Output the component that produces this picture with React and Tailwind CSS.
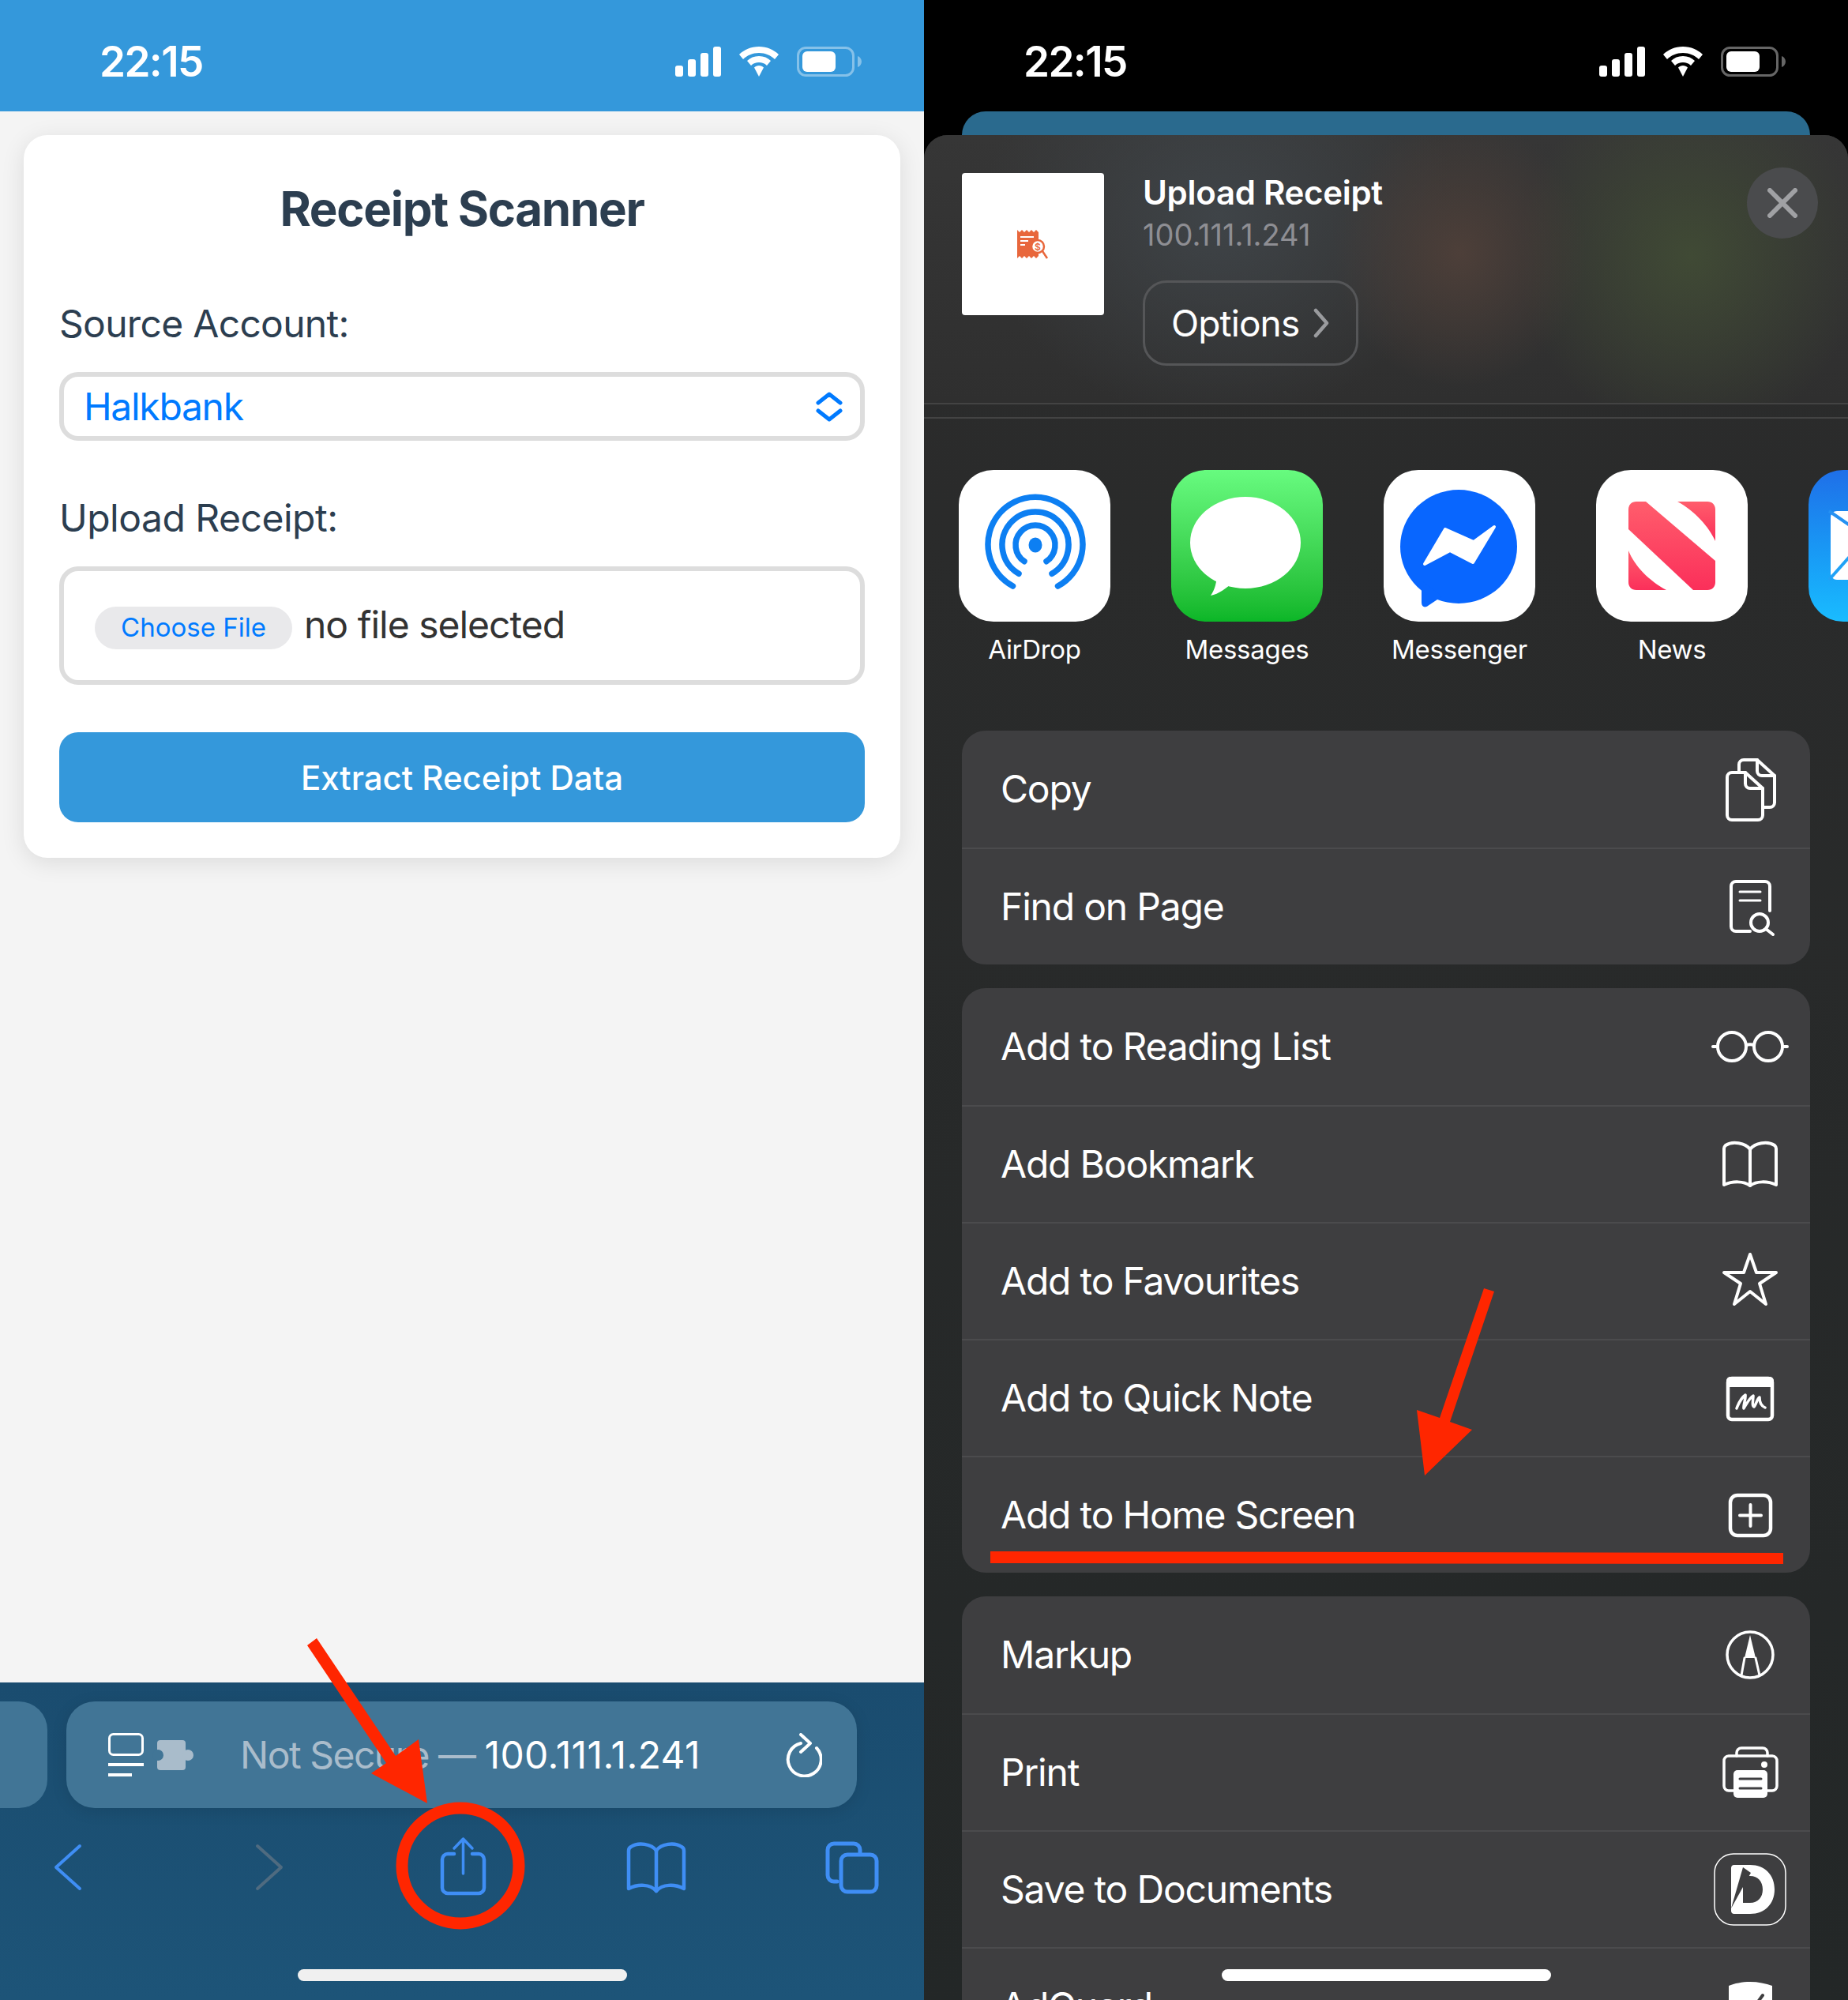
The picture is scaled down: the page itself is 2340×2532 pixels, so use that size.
const BLUE = "#3f8ef5";

function StatusIcons() {
  return (
    <svg width="237" height="38" viewBox="0 0 237 38" fill="none">
      <rect x="0" y="24" width="10" height="14" rx="3" fill="#fff" />
      <rect x="16" y="16" width="10" height="22" rx="3" fill="#fff" />
      <rect x="32" y="8" width="10" height="30" rx="3" fill="#fff" />
      <rect x="48" y="0" width="10" height="38" rx="3" fill="#fff" />
      <g transform="translate(23 0)">
        <path d="M83 0C93 0 102 4 108 10L103 16C98 11 91 8 83 8C75 8 68 11 63 16L58 10C64 4 73 0 83 0Z" fill="#fff" />
        <path d="M83 12C89 12 94 14 98 18L93 24C90 21 87 20 83 20C79 20 76 21 73 24L68 18C72 14 77 12 83 12Z" fill="#fff" />
        <path d="M83 24C85.500 24 87.500 25 89 26.500L83 38L77 26.500C78.500 25 80.500 24 83 24Z" fill="#fff" />
      </g>
      <rect x="155.500" y="1.500" width="70" height="35" rx="10" stroke="#fff" strokeOpacity="0.4" strokeWidth="3" />
      <rect x="161" y="6" width="42" height="26" rx="6" fill="#fff" />
      <path d="M231 12C234 13 236 16 236 19C236 22 234 25 231 26Z" fill="#fff" fillOpacity="0.4" />
    </svg>
  );
}

function StatusBar({ bg }) {
  return (
    <div className={`flex h-[141px] shrink-0 items-center justify-between pt-[15px] pl-[126px] pr-[78px] ${bg}`}>
      <span className="text-[53px] font-semibold leading-none tracking-[-1.6px] text-white">22:15</span>
      <StatusIcons />
    </div>
  );
}

function Icon({ children }) {
  return (
    <svg width="100" height="100" viewBox="0 0 100 100" fill="none" stroke="#fff" strokeWidth="4" strokeLinecap="round" strokeLinejoin="round">
      {children}
    </svg>
  );
}

const CopyIcon = () => (
  <Icon>
    <path d="M27 29H44L66 49V83A6 6 0 0 1 60 89H27A6 6 0 0 1 21 83V35A6 6 0 0 1 27 29Z" />
    <path d="M44 29V43A6 6 0 0 0 50 49H66" />
    <path d="M36 29V19A6 6 0 0 1 42 13H59L81 33V67A6 6 0 0 1 75 73H66" />
    <path d="M59 13V27A6 6 0 0 0 65 33H81" />
  </Icon>
);

const FindIcon = () => (
  <Icon>
    <path d="M75 55V24A6 6 0 0 0 69 18H32A6 6 0 0 0 26 24V75A6 6 0 0 0 32 81H50" />
    <path d="M37 31H63M37 42H63" strokeWidth="3" />
    <circle cx="62" cy="70" r="11" />
    <path d="M70 78L79 85" />
  </Icon>
);

const GlassesIcon = () => (
  <Icon>
    <circle cx="27" cy="50" r="18" />
    <circle cx="73" cy="50" r="18" />
    <path d="M45 48C48 47 52 47 55 48M3 50H9M91 50H97" />
  </Icon>
);

const BookIcon = () => (
  <Icon>
    <path d="M50 31C44 23 28 20 19 26C18 27 17 28 17 30V76C28 71 42 71 50 77C58 71 72 71 83 76V30C83 28 82 27 81 26C72 20 56 23 50 31Z" />
    <path d="M50 31V77" />
  </Icon>
);

const StarIcon = () => (
  <Icon>
    <path d="M50 16L58 39H83L62 53L70 79L50 63L30 79L38 53L17 39H42Z" />
  </Icon>
);

const NoteIcon = () => (
  <Icon>
    <rect x="22" y="25" width="56" height="52" rx="5" strokeWidth="4.500" />
    <path d="M25 23H75A5 5 0 0 1 80 28V36H20V28A5 5 0 0 1 25 23Z" fill="#fff" stroke="none" />
    <path d="M33 63C36 55 41 48 44 46C45 50 41 60 42 63C46 56 50 49 54 47C54 52 52 60 55 61C58 58 59 50 62 49C62 55 64 60 69 62" strokeWidth="3.500" />
  </Icon>
);

const PlusIcon = () => (
  <Icon>
    <rect x="25" y="25" width="51" height="51" rx="9" strokeWidth="4.500" />
    <path d="M37 50.500H64M50.500 37V64" />
  </Icon>
);

const MarkupIcon = () => (
  <Icon>
    <circle cx="50" cy="50" r="29" strokeWidth="3.500" />
    <path d="M50 25L57 54H43Z" fill="#fff" stroke="none" />
    <path d="M43 54L39 76M57 54L62 76" strokeWidth="3" />
  </Icon>
);

const PrintIcon = () => (
  <Icon>
    <path d="M33 29V25A6 6 0 0 1 39 19H66A6 6 0 0 1 72 25V29" strokeWidth="3.500" />
    <path d="M29 73H23A6 6 0 0 1 17 67V36A6 6 0 0 1 23 29H78A6 6 0 0 1 84 36V67A6 6 0 0 1 78 73H72" strokeWidth="3.500" />
    <rect x="29" y="47" width="43" height="35" rx="5" fill="#fff" stroke="none" />
    <path d="M37 58H64M37 70H64" stroke="#3e3e40" strokeWidth="3" />
    <circle cx="68" cy="40" r="4" fill="#fff" stroke="none" />
  </Icon>
);

const DocumentsIcon = () => (
  <Icon>
    <rect x="5" y="5" width="90" height="90" rx="24" strokeWidth="1.500" />
    <path fillRule="evenodd" d="M30 19H50C69 19 81 32 81 50C81 68 69 81 50 81H30C27 81 26 79 26 77V23C26 21 27 19 30 19ZM41 33V67H50C60 67 66 60 66 50C66 40 60 33 50 33Z" fill="#fff" stroke="none" />
    <path d="M41 22L51 29L26 74Z" fill="#3e3e40" stroke="none" />
  </Icon>
);

const ShieldIcon = () => (
  <Icon>
    <path d="M23 24C30 21 40 19 50 19C60 19 70 21 78 24V58C78 72 66 84 50 90C34 84 23 72 23 58Z" fill="#fff" stroke="none" />
    <path d="M36 52L47 62L66 36" stroke="#3e3e40" strokeWidth="4" />
  </Icon>
);

const GROUPS = [
  [
    ["Copy", CopyIcon],
    ["Find on Page", FindIcon],
  ],
  [
    ["Add to Reading List", GlassesIcon],
    ["Add Bookmark", BookIcon],
    ["Add to Favourites", StarIcon],
    ["Add to Quick Note", NoteIcon],
    ["Add to Home Screen", PlusIcon],
  ],
  [
    ["Markup", MarkupIcon],
    ["Print", PrintIcon],
    ["Save to Documents", DocumentsIcon],
    ["AdGuard", ShieldIcon],
  ],
];

function ActionGroup({ rows }) {
  return (
    <div className="w-[1074px] shrink-0 rounded-[30px] bg-[#3e3e40]">
      {rows.map(([label, RowIcon], i) => (
        <div
          key={label}
          className={`flex h-[148px] items-center justify-between pl-[49px] pr-[26px] ${i > 0 ? "border-t-2 border-[#4b4b4d]" : ""}`}
        >
          <span className="text-[48px] leading-none tracking-[-1.2px] text-white">{label}</span>
          <RowIcon />
        </div>
      ))}
    </div>
  );
}

function AirDropIcon() {
  return (
    <svg width="192" height="192" viewBox="0 0 192 192" fill="none" stroke="#0d7ff2" strokeWidth="7.500" strokeLinecap="round">
      <path d="M68.500 147A60 60 0 1 1 125.500 147" />
      <path d="M76 131.300A42 42 0 1 1 118 131.300" />
      <path d="M83 115.700A25 25 0 1 1 111 115.700" />
      <ellipse cx="97" cy="95" rx="8.500" ry="9.500" fill="#0d7ff2" stroke="none" />
    </svg>
  );
}

function MessagesIcon() {
  return (
    <svg width="192" height="192" viewBox="0 0 192 192" fill="none">
      <ellipse cx="94" cy="92" rx="70" ry="58" fill="#fff" />
      <path d="M58 130C58 142 55 152 50 159C60 157 70 150 78 142Z" fill="#fff" />
    </svg>
  );
}

function MessengerIcon() {
  return (
    <svg width="192" height="192" viewBox="0 0 192 192" fill="none">
      <ellipse cx="95" cy="97" rx="74" ry="72" fill="#0866ff" />
      <path d="M48 140V168C48 173 52 175 56 172L74 160Z" fill="#0866ff" />
      <path d="M52 119L78 75L114 91L140 72L113 117L84 102Z" fill="#fff" stroke="#fff" strokeWidth="4" strokeLinejoin="round" />
    </svg>
  );
}

function NewsIcon() {
  return (
    <svg width="192" height="192" viewBox="0 0 192 192" fill="none">
      <defs>
        <linearGradient id="newsRed" x1="0" y1="0" x2="0" y2="1">
          <stop offset="0" stopColor="#ff5d6c" />
          <stop offset="1" stopColor="#fb2f5a" />
        </linearGradient>
      </defs>
      <path d="M41 50C41 44 45 40 51 40H63L151 115V142C151 148 147 152 141 152H123L41 75Z" fill="url(#newsRed)" />
      <path d="M103 40H141C147 40 151 44 151 50V90C143 72 125 52 103 40Z" fill="url(#newsRed)" />
      <path d="M41 102C49 122 67 140 89 152H51C45 152 41 148 41 142Z" fill="url(#newsRed)" />
    </svg>
  );
}

function MailIcon() {
  return (
    <svg width="192" height="192" viewBox="0 0 192 192" fill="none">
      <rect x="28" y="52" width="136" height="87" rx="8" fill="#fff" />
      <path d="M26 52L96 100L166 52" stroke="#2591f2" strokeWidth="4" />
      <path d="M26 139L74 85" stroke="#21a2f6" strokeWidth="4" />
    </svg>
  );
}

const APPS = [
  { name: "AirDrop", Logo: AirDropIcon, box: "bg-white" },
  { name: "Messages", Logo: MessagesIcon, box: "bg-linear-to-b from-[#67fb7f] to-[#0ab627]" },
  { name: "Messenger", Logo: MessengerIcon, box: "bg-white" },
  { name: "News", Logo: NewsIcon, box: "bg-white" },
  { name: "", Logo: MailIcon, box: "bg-linear-to-b from-[#1f6fe8] to-[#1abcff]" },
];

function ReceiptGlyph() {
  return (
    <svg width="40" height="37" viewBox="0 0 40 37" fill="none">
      <path d="M0 0L3 3L6 0L9 3L12 0L15 3L18 0L21 3L24 0L27 3V33L24 36L21 33L18 36L15 33L12 36L9 33L6 36L3 33L0 36Z" fill="#e8673c" />
      <path d="M4 9H21M4 14H14M4 19H10" stroke="#fff" strokeWidth="2" />
      <circle cx="26" cy="21" r="8" fill="#fff" stroke="#e8673c" strokeWidth="2.500" />
      <path d="M32 27L38 36" stroke="#e8673c" strokeWidth="2.500" />
      <text x="26" y="25.500" textAnchor="middle" fontSize="12" fontWeight="600" fill="#e8673c">$</text>
    </svg>
  );
}

function ToolbarIcon({ children, stroke = BLUE }) {
  return (
    <svg width="100" height="90" viewBox="0 0 100 90" fill="none" stroke={stroke} strokeWidth="4" strokeLinecap="round" strokeLinejoin="round">
      {children}
    </svg>
  );
}

function Annotations() {
  return (
    <svg className="pointer-events-none absolute inset-0" width="2340" height="2532" viewBox="0 0 2340 2532" fill="none">
      <path d="M389 2083L401 2074L501 2223L530 2202L541 2283L470 2245L489 2232Z" fill="#ff2600" />
      <ellipse cx="583" cy="2362" rx="74" ry="73" stroke="#ff2600" strokeWidth="15" />
      <path d="M1879 1631L1892 1635L1836 1800L1864 1810L1804 1868L1794 1785L1823 1795Z" fill="#ff2600" />
      <path d="M1254 1964L2258 1966V1980L1254 1979Z" fill="#ff2600" />
    </svg>
  );
}

function ScannerPane() {
  return (
    <div className="relative flex h-full w-[1170px] shrink-0 flex-col bg-[#f4f4f4]">
      <StatusBar bg="bg-[#3498db]" />

      <div className="flex-1 px-[30px] pt-[30px]">
        <div className="rounded-[30px] bg-white px-[45px] pt-[57px] pb-[45px] shadow-[0_6px_30px_rgba(0,0,0,0.1)]">
          <h1 className="text-center text-[60px] font-bold leading-[72px] tracking-[-1.3px] text-[#2c3e50]">Receipt Scanner</h1>

          <div className="mt-[80px] text-[48px] font-normal leading-[60px] tracking-[-0.7px] text-[#2c3e50]">Source Account:</div>
          <div className="mt-[31px] flex h-[87px] items-center justify-between rounded-[24px] border-[6px] border-[#dddddd] pl-[25px] pr-[22px]">
            <span className="text-[48px] leading-none tracking-[-1.3px] text-[#007aff]">Halkbank</span>
            <svg width="34" height="38" viewBox="0 0 34 38" fill="none" stroke="#007aff" strokeWidth="5" strokeLinecap="round" strokeLinejoin="round">
              <path d="M3 14L17 3L31 14M3 24L17 35L31 24" />
            </svg>
          </div>

          <div className="mt-[68px] text-[48px] font-normal leading-[60px] tracking-[-0.5px] text-[#2c3e50]">Upload Receipt:</div>
          <div className="mt-[31px] flex h-[150px] items-center gap-[15px] rounded-[24px] border-[6px] border-[#dddddd] pl-[39px]">
            <span className="mt-[6px] flex h-[54px] w-[250px] items-center justify-center rounded-[27px] bg-[#e9e9eb] text-[33px] text-[#007aff]">Choose File</span>
            <span className="mb-[2px] text-[48px] leading-none tracking-[-1px] text-[#333333]">no file selected</span>
          </div>

          <button className="mt-[60px] flex h-[114px] w-full items-center justify-center rounded-[24px] bg-[#3498db] text-[42px] font-medium text-white">
            Extract Receipt Data
          </button>
        </div>
      </div>

      <div className="h-[402px] shrink-0 bg-linear-to-b from-[#1a4c6f] to-[#1d5478] pt-[24px]">
        <div className="flex gap-[24px]">
          <div className="h-[135px] w-[60px] rounded-r-[36px] bg-[#417596]" />
          <div className="flex h-[135px] w-[1001px] items-center rounded-[36px] bg-[#417596] pl-[53px] pr-[44px] shadow-[0_4px_20px_rgba(0,0,0,0.1)]">
            <svg width="110" height="56" viewBox="0 0 110 56" fill="none">
              <rect x="1.500" y="1.500" width="42" height="26" rx="5" stroke="#fff" strokeWidth="3" />
              <path d="M0 40H45M0 53H30" stroke="#fff" strokeWidth="4" />
              <rect x="62" y="9" width="36" height="38" rx="4" fill="#a9bccb" />
              <circle cx="101" cy="28" r="7" fill="#a9bccb" />
              <circle cx="63" cy="28" r="7" fill="#417596" />
            </svg>
            <span className="ml-[57px] whitespace-pre text-[48px] leading-none tracking-[0.4px] text-white">
              <span className="tracking-[-1.5px] text-[#a9bccb]">Not Secure — </span>100.111.1.241
            </span>
            <svg className="ml-auto" width="46" height="56" viewBox="0 0 46 56" fill="none" stroke="#fff" strokeWidth="4" strokeLinecap="round" strokeLinejoin="round">
              <path d="M19 13A21 21 0 1 0 39 19" />
              <path d="M19 2L31 13L19 24" />
            </svg>
          </div>
        </div>

        <div className="mt-[34px] flex justify-between pl-[36px] pr-[41px]">
          <ToolbarIcon>
            <path d="M65 14L35 41L65 68" />
          </ToolbarIcon>
          <ToolbarIcon stroke="#4f6b80">
            <path d="M42 14L72 41L42 68" />
          </ToolbarIcon>
          <ToolbarIcon>
            <path d="M42 24H34A7 7 0 0 0 27 31V67A7 7 0 0 0 34 74H73A7 7 0 0 0 80 67V31A7 7 0 0 0 73 24H65" strokeWidth="4.500" />
            <path d="M53.500 49V5M42 17L53.500 5L65 17" strokeWidth="3.500" />
          </ToolbarIcon>
          <ToolbarIcon>
            <path d="M50 20C44 11 27 9 18 15C16 16 15 18 15 20V68C27 62 42 62 50 71C58 62 73 62 85 68V20C85 18 84 16 82 15C73 9 56 11 50 20Z" strokeWidth="4.500" />
            <path d="M50 20V71" strokeWidth="4.500" />
          </ToolbarIcon>
          <ToolbarIcon>
            <path d="M31 59H27A8 8 0 0 1 19 51V19A8 8 0 0 1 27 11H52A8 8 0 0 1 60 19V23" strokeWidth="5" />
            <rect x="36" y="25" width="45" height="47" rx="8" strokeWidth="5" />
          </ToolbarIcon>
        </div>
      </div>

      <div className="absolute bottom-[24px] left-[377px] h-[15px] w-[417px] rounded-full bg-[#f0f0f0]" />
    </div>
  );
}

function SharePane() {
  return (
    <div className="relative flex h-full w-[1170px] shrink-0 flex-col overflow-hidden bg-black">
      <StatusBar bg="bg-black" />
      <div className="mx-[48px] h-[30px] shrink-0 rounded-t-[30px] bg-[#2a6a8e]" />

      <div className="flex-1 overflow-hidden rounded-t-[30px] bg-linear-to-b from-[#2c2c2c] to-[#232727]">
        <div className="flex h-[339px] bg-[radial-gradient(ellipse_160px_170px_at_58%_44%,#4d3f39,transparent),radial-gradient(ellipse_220px_230px_at_83%_45%,#404a35,transparent),radial-gradient(ellipse_300px_260px_at_32%_30%,#3f4448,transparent),linear-gradient(#363636,#2f2f2f)] pt-[48px] pl-[48px] pr-[38px]">
          <div className="flex h-[180px] w-[180px] shrink-0 items-center justify-center rounded-[4px] bg-white">
            <ReceiptGlyph />
          </div>
          <div className="ml-[49px] flex-1">
            <div className="mt-[1px] text-[42px] font-semibold leading-[48px] tracking-[-0.3px] text-white">Upload Receipt</div>
            <div className="mt-[5px] text-[38px] leading-[48px] text-[#8e8e93]">100.111.1.241</div>
            <div className="mt-[34px] flex h-[108px] w-[273px] items-center gap-[18px] rounded-[30px] border-[3px] border-[#555658] pl-[33px]">
              <span className="text-[46px] leading-none tracking-[-0.9px] text-white">Options</span>
              <svg width="20" height="38" viewBox="0 0 20 38" fill="none" stroke="#9a9b9e" strokeWidth="4.500" strokeLinecap="round" strokeLinejoin="round">
                <path d="M3 3L17 19L3 35" />
              </svg>
            </div>
          </div>
          <div className="mt-[-7px] flex h-[90px] w-[90px] items-center justify-center rounded-full bg-[#4a4b4d]">
            <svg width="38" height="38" viewBox="0 0 38 38" fill="none" stroke="#a0a1a4" strokeWidth="6" strokeLinecap="round">
              <path d="M3 3L35 35M35 3L3 35" />
            </svg>
          </div>
        </div>
        <div className="h-[20px] border-y-2 border-[#434343]" />

        <div className="mt-[65px] flex gap-[77px] pl-[44px]">
          {APPS.map(({ name, Logo, box }) => (
            <div key={name || "Mail"} className="flex w-[192px] shrink-0 flex-col items-center">
              <div className={`h-[192px] w-[192px] overflow-hidden rounded-[44px] ${box}`}>
                <Logo />
              </div>
              <span className="mt-[15px] text-[33px] leading-[40px] tracking-[-0.3px] text-white">{name}</span>
            </div>
          ))}
        </div>

        <div className="mt-[83px] flex flex-col items-center gap-[30px]">
          {GROUPS.map((rows, i) => (
            <ActionGroup key={i} rows={rows} />
          ))}
        </div>
      </div>

      <div className="absolute bottom-[24px] left-[377px] h-[15px] w-[417px] rounded-full bg-white" />
    </div>
  );
}

export default function App() {
  return (
    <div className="relative flex h-[2532px] w-[2340px] overflow-hidden font-[Inter,sans-serif]">
      <ScannerPane />
      <SharePane />
      <Annotations />
    </div>
  );
}
